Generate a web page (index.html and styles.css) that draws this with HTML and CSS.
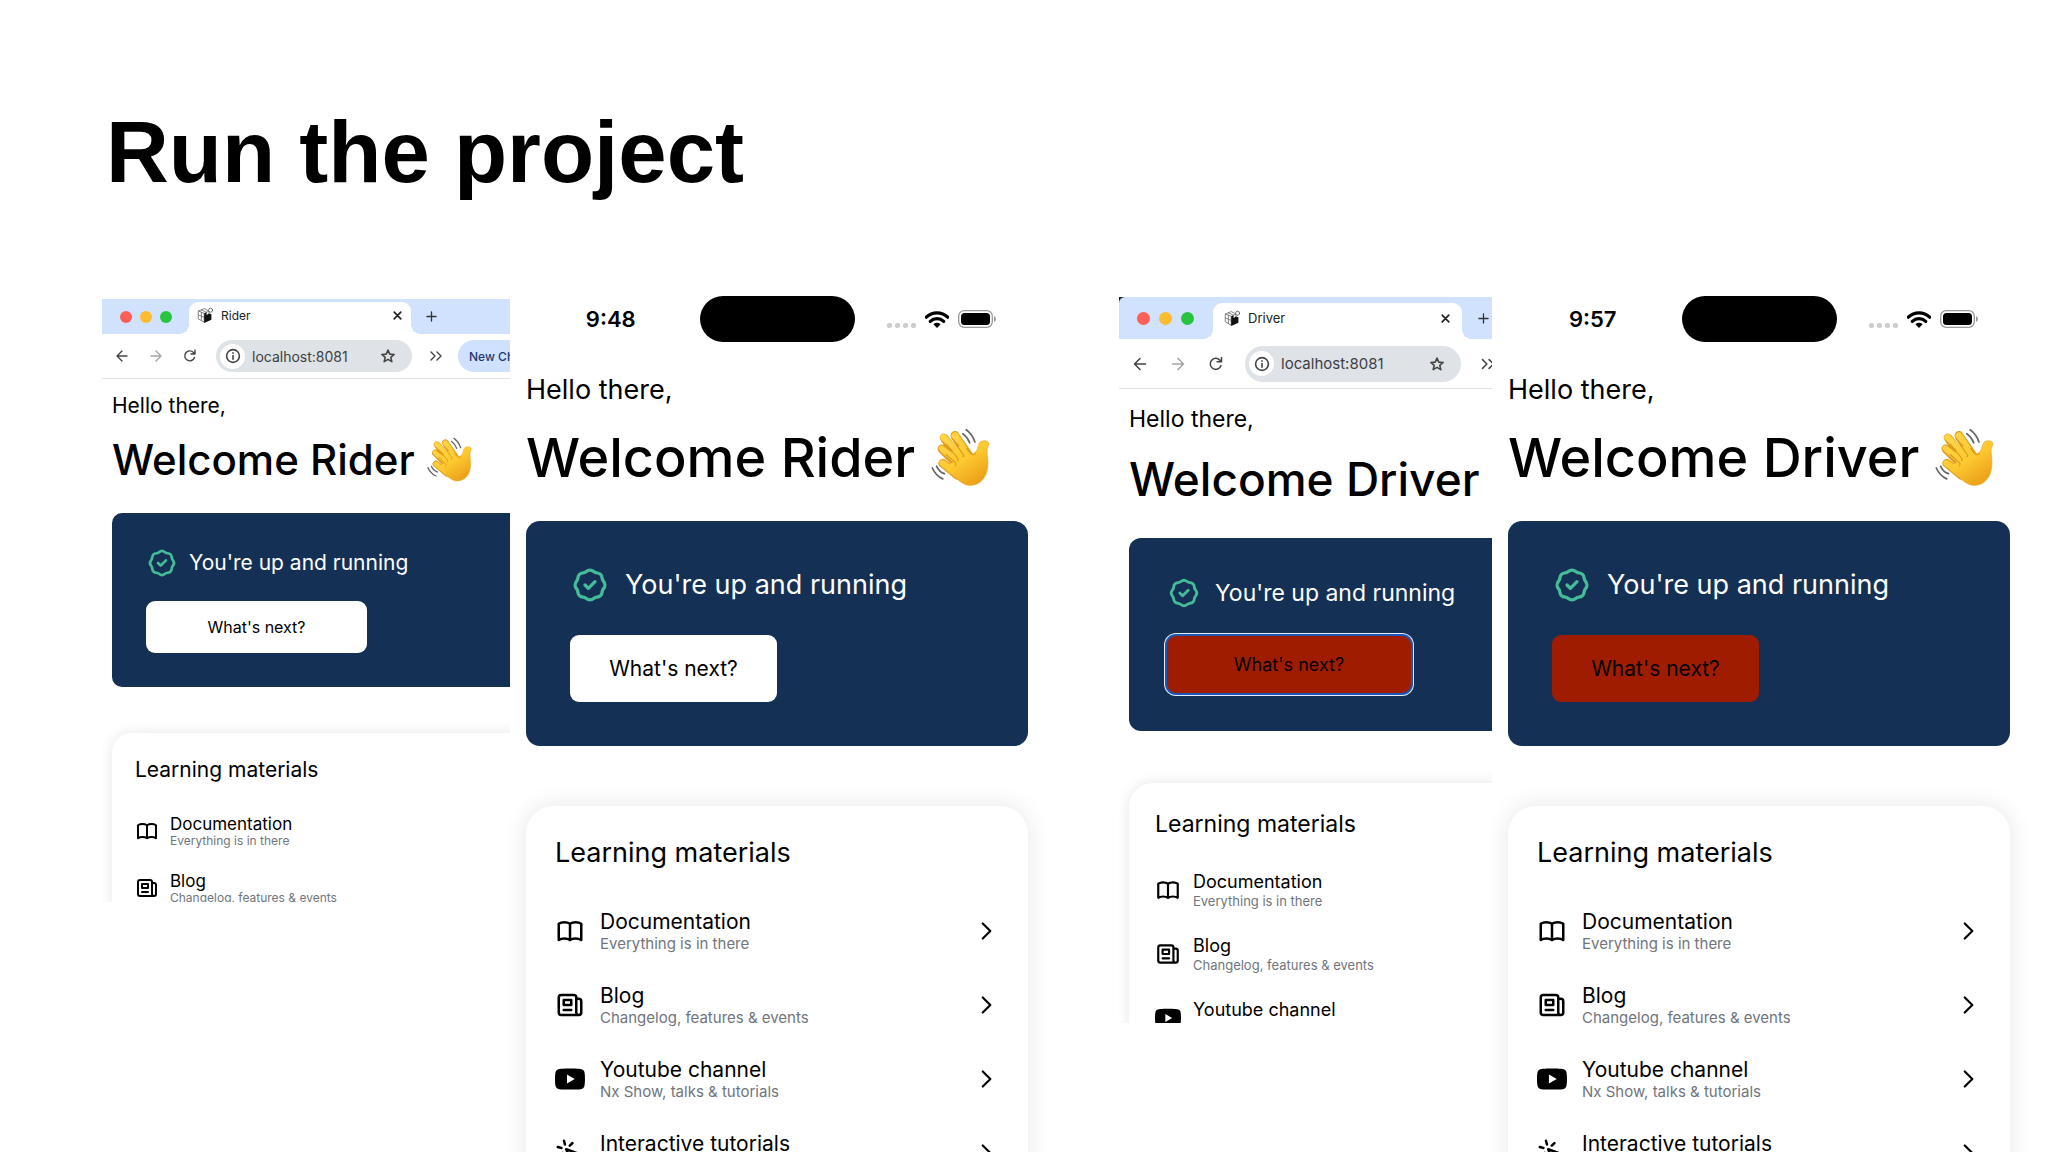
FILE: index.html
```html
<!DOCTYPE html>
<html lang="en">
<head>
  <meta charset="UTF-8" />
  <meta name="viewport" content="width=device-width, initial-scale=1.0" />
  <title>Run the project</title>
  <link rel="stylesheet" href="styles.css">
</head>
<body>
  <!-- Shared icons -->
  <svg class="sprite" aria-hidden="true">
    <symbol id="check" viewBox="0 0 24 24"><path d="M9 12l2 2 4-4M7.835 4.697a3.42 3.42 0 001.946-.806 3.42 3.42 0 014.438 0 3.42 3.42 0 001.946.806 3.42 3.42 0 013.138 3.138 3.42 3.42 0 00.806 1.946 3.42 3.42 0 010 4.438 3.42 3.42 0 00-.806 1.946 3.42 3.42 0 01-3.138 3.138 3.42 3.42 0 00-1.946.806 3.42 3.42 0 01-4.438 0 3.42 3.42 0 00-1.946-.806 3.42 3.42 0 01-3.138-3.138 3.42 3.42 0 00-.806-1.946 3.42 3.42 0 010-4.438 3.42 3.42 0 00.806-1.946 3.42 3.42 0 013.138-3.138z"/></symbol>
    <symbol id="book" viewBox="0 0 24 24"><path d="M12 6.253v13m0-13C10.832 5.477 9.246 5 7.5 5S4.168 5.477 3 6.253v13C4.168 18.477 5.754 18 7.5 18s3.332.477 4.5 1.253m0-13C13.168 5.477 14.754 5 16.5 5c1.747 0 3.332.477 4.5 1.253v13C19.832 18.477 18.247 18 16.5 18c-1.746 0-3.332.477-4.5 1.253"/></symbol>
    <symbol id="news" viewBox="0 0 24 24"><path d="M19 20H5a2 2 0 01-2-2V6a2 2 0 012-2h10a2 2 0 012 2v1m2 13a2 2 0 01-2-2V7m2 13a2 2 0 002-2V9a2 2 0 00-2-2h-2m-4-3H9M7 16h6M7 8h6v4H7V8z"/></symbol>
    <symbol id="youtube" viewBox="0 0 24 24"><path fill="#000" stroke="none" d="M23.5 6.2a3 3 0 00-2.1-2.1C19.5 3.55 12 3.55 12 3.55s-7.5 0-9.4.55A3 3 0 00.5 6.2C0 8.1 0 12 0 12s0 3.9.5 5.8a3 3 0 002.1 2.1c1.9.55 9.4.55 9.4.55s7.5 0 9.4-.55a3 3 0 002.1-2.1C24 15.9 24 12 24 12s0-3.9-.5-5.8zM9.55 15.6V8.4l6.27 3.6z"/></symbol>
    <symbol id="cursor" viewBox="0 0 24 24"><path d="M15 15l-2 5L9 9l11 4-5 2zm0 0l5 5M7.188 2.239l.777 2.897M5.136 7.965l-2.898-.777M13.95 4.05l-2.122 2.122m-5.657 5.656l-2.12 2.122"/></symbol>
    <symbol id="chevron" viewBox="0 0 24 24"><path d="M9 5l7 7-7 7"/></symbol>
    <symbol id="back" viewBox="0 0 20 20"><path d="M15 10H5m5-5l-5 5 5 5"/></symbol>
    <symbol id="forward" viewBox="0 0 20 20"><path d="M5 10h10m-5-5l5 5-5 5"/></symbol>
    <symbol id="reload" viewBox="0 0 20 20"><path d="M14.5 11.5a5 5 0 11-1-5L15 8m0-4v4h-4"/></symbol>
    <symbol id="info" viewBox="0 0 20 20"><circle cx="10" cy="10" r="8"/><path d="M10 9.500v4.500M10 6v.500"/></symbol>
    <symbol id="star" viewBox="0 0 20 20"><path d="M10 2.500l2.200 5.100 5.500.5-4.200 3.600 1.300 5.400-4.800-2.900-4.800 2.900 1.300-5.400-4.200-3.600 5.500-.5z"/></symbol>
    <symbol id="more" viewBox="0 0 20 20"><path d="M5 6l4 4-4 4m6-8l4 4-4 4"/></symbol>
    <symbol id="close" viewBox="0 0 20 20"><path d="M4 4l12 12M16 4L4 16"/></symbol>
    <symbol id="plus" viewBox="0 0 20 20"><path d="M10 3v14M3 10h14"/></symbol>
    <symbol id="cube" viewBox="0 0 20 20">
      <path fill="#fff" stroke="#666" d="M2 5l7-3 6 3v10l-6 4-7-4zM2 5l7 3 6-3M9 8v11M2 10l7 3M5.500 6.500v10M5.500 3.500l6 3"/>
      <path fill="#111" stroke="none" d="M9 8l3-1v3l3-2 3 1v7l-9 4z"/>
      <circle cx="17" cy="4" r="2.500" fill="#fff" stroke="#555"/>
    </symbol>
    <symbol id="wifi" viewBox="0 0 24 17">
      <path fill="none" stroke="#000" stroke-width="3.200" d="M1.300 6.200a15.500 15.500 0 0121.400 0M5.300 10.300a9.800 9.800 0 0113.400 0"/>
      <path fill="#000" d="M12 17l-3.600-3.700a5.200 5.200 0 017.200 0z"/>
    </symbol>
    <symbol id="battery" viewBox="0 0 38 18">
      <rect x=".7" y=".7" width="33.600" height="16.600" rx="5.500" fill="none" stroke="#999" stroke-width="1.300"/>
      <rect x="3" y="3" width="29" height="12" rx="3.500" fill="#000"/>
      <path fill="#999" d="M36 6q2 1 2 3t-2 3z"/>
    </symbol>
    <symbol id="wave" viewBox="0 0 138 138">
      <linearGradient id="skin" x1="0" y1="0" x2="0.600" y2="1">
        <stop offset="0" stop-color="#ffd84a"/>
        <stop offset=".6" stop-color="#fdc930"/>
        <stop offset="1" stop-color="#eda41c"/>
      </linearGradient>
      <path fill="none" stroke="#e09a1c" stroke-width="20" stroke-linecap="round" d="M55 17l32 46M31 24l38 51M25 48l40 40M27 81l34 28"/>
      <path fill="url(#skin)" stroke="#e9a825" stroke-width="1.500" d="M47 21c-4-7 8-17 15-8l28 42q6 7 11 2c6-5 7-15 10-22 4-8 23-8 22 2-1 6-5 9-4 18 1 14 4 28 0 43-4 20-20 34-38 34-12 0-20-6-28-12L22 87c-9-8 1-18 10-12l10 8 8-4-30-26c-8-8 1-18 9-11l18 14 2-5-26-24c-7-9 5-19 13-10l24 27 5-3z"/>
      <path fill="none" stroke="#de941d" stroke-width="2.500" stroke-linecap="round" d="M48 24l26 37q3 5-1 5M36 38l25 31q3 4 0 6M35 61l20 18q5 4 1 8M82 47l9 12q5 5 11 0"/>
      <path fill="none" stroke="#666" stroke-width="4" stroke-linecap="round" d="M81 4q14 10 20 28M73 13q11 8 16 21M3 92q8 18 24 25M13 88q6 13 18 17"/>
    </symbol>
  </svg>

  <main class="slide">
    <h1>Run the project</h1>

    <div class="screens">
      <!-- Rider: web + iOS -->
      <section class="pair pair-rider">
        <div class="panel browser rider">
          <div class="tabs">
            <span class="light red"></span><span class="light yellow"></span><span class="light green"></span>
            <div class="tab">
              <svg class="favicon"><use href="#cube"/></svg>
              <span>Rider</span>
              <button class="tab-close" aria-label="Close tab"><svg><use href="#close"/></svg></button>
            </div>
            <button class="tab-new" aria-label="New tab"><svg><use href="#plus"/></svg></button>
          </div>
          <div class="toolbar">
            <button aria-label="Back"><svg><use href="#back"/></svg></button>
            <button class="dim" aria-label="Forward"><svg><use href="#forward"/></svg></button>
            <button aria-label="Reload"><svg><use href="#reload"/></svg></button>
            <div class="omnibox">
              <span class="site"><svg><use href="#info"/></svg></span>
              <input type="text" value="localhost:8081" aria-label="Address">
              <button aria-label="Bookmark"><svg><use href="#star"/></svg></button>
            </div>
            <button aria-label="More"><svg><use href="#more"/></svg></button>
            <button class="chip">New Chrome available</button>
          </div>
          <div class="page">
            <p class="hello">Hello there,</p>
            <h2>Welcome Rider <svg class="wave" role="img" aria-label="waving hand"><use href="#wave"/></svg></h2>
            <div class="hero">
              <p class="running"><svg><use href="#check"/></svg>You're up and running</p>
              <button class="next">What's next?</button>
            </div>
            <div class="learning">
              <h3>Learning materials</h3>
              <ul>
                <li><a href="#"><svg class="icon"><use href="#book"/></svg><span class="label">Documentation<small>Everything is in there</small></span></a></li>
                <li><a href="#"><svg class="icon"><use href="#news"/></svg><span class="label">Blog<small>Changelog, features &amp; events</small></span></a></li>
              </ul>
            </div>
          </div>
        </div>

        <div class="panel phone">
          <div class="status">
            <time>9:48</time>
            <span class="island"></span>
            <span class="signal"><span class="dots"><i></i><i></i><i></i><i></i></span><svg class="wifi"><use href="#wifi"/></svg><svg class="battery"><use href="#battery"/></svg></span>
          </div>
          <div class="page">
            <p class="hello">Hello there,</p>
            <h2>Welcome Rider <svg class="wave" role="img" aria-label="waving hand"><use href="#wave"/></svg></h2>
            <div class="hero">
              <p class="running"><svg><use href="#check"/></svg>You're up and running</p>
              <button class="next">What's next?</button>
            </div>
            <div class="learning">
              <h3>Learning materials</h3>
              <ul>
                <li><a href="#"><svg class="icon"><use href="#book"/></svg><span class="label">Documentation<small>Everything is in there</small></span><svg class="go"><use href="#chevron"/></svg></a></li>
                <li><a href="#"><svg class="icon"><use href="#news"/></svg><span class="label">Blog<small>Changelog, features &amp; events</small></span><svg class="go"><use href="#chevron"/></svg></a></li>
                <li><a href="#"><svg class="icon"><use href="#youtube"/></svg><span class="label">Youtube channel<small>Nx Show, talks &amp; tutorials</small></span><svg class="go"><use href="#chevron"/></svg></a></li>
                <li><a href="#"><svg class="icon"><use href="#cursor"/></svg><span class="label">Interactive tutorials<small>Create an app, step by step</small></span><svg class="go"><use href="#chevron"/></svg></a></li>
              </ul>
            </div>
          </div>
        </div>
      </section>

      <!-- Driver: web + iOS -->
      <section class="pair pair-driver">
        <div class="panel browser driver">
          <div class="tabs">
            <span class="light red"></span><span class="light yellow"></span><span class="light green"></span>
            <div class="tab">
              <svg class="favicon"><use href="#cube"/></svg>
              <span>Driver</span>
              <button class="tab-close" aria-label="Close tab"><svg><use href="#close"/></svg></button>
            </div>
            <button class="tab-new" aria-label="New tab"><svg><use href="#plus"/></svg></button>
          </div>
          <div class="toolbar">
            <button aria-label="Back"><svg><use href="#back"/></svg></button>
            <button class="dim" aria-label="Forward"><svg><use href="#forward"/></svg></button>
            <button aria-label="Reload"><svg><use href="#reload"/></svg></button>
            <div class="omnibox">
              <span class="site"><svg><use href="#info"/></svg></span>
              <input type="text" value="localhost:8081" aria-label="Address">
              <button aria-label="Bookmark"><svg><use href="#star"/></svg></button>
            </div>
            <button aria-label="More"><svg><use href="#more"/></svg></button>
          </div>
          <div class="page">
            <p class="hello">Hello there,</p>
            <h2>Welcome Driver</h2>
            <div class="hero">
              <p class="running"><svg><use href="#check"/></svg>You're up and running</p>
              <button class="next danger focused">What's next?</button>
            </div>
            <div class="learning">
              <h3>Learning materials</h3>
              <ul>
                <li><a href="#"><svg class="icon"><use href="#book"/></svg><span class="label">Documentation<small>Everything is in there</small></span></a></li>
                <li><a href="#"><svg class="icon"><use href="#news"/></svg><span class="label">Blog<small>Changelog, features &amp; events</small></span></a></li>
                <li><a href="#"><svg class="icon"><use href="#youtube"/></svg><span class="label">Youtube channel<small>Nx Show, talks &amp; tutorials</small></span></a></li>
              </ul>
            </div>
          </div>
        </div>

        <div class="panel phone">
          <div class="status">
            <time>9:57</time>
            <span class="island"></span>
            <span class="signal"><span class="dots"><i></i><i></i><i></i><i></i></span><svg class="wifi"><use href="#wifi"/></svg><svg class="battery"><use href="#battery"/></svg></span>
          </div>
          <div class="page">
            <p class="hello">Hello there,</p>
            <h2>Welcome Driver <svg class="wave" role="img" aria-label="waving hand"><use href="#wave"/></svg></h2>
            <div class="hero">
              <p class="running"><svg><use href="#check"/></svg>You're up and running</p>
              <button class="next danger">What's next?</button>
            </div>
            <div class="learning">
              <h3>Learning materials</h3>
              <ul>
                <li><a href="#"><svg class="icon"><use href="#book"/></svg><span class="label">Documentation<small>Everything is in there</small></span><svg class="go"><use href="#chevron"/></svg></a></li>
                <li><a href="#"><svg class="icon"><use href="#news"/></svg><span class="label">Blog<small>Changelog, features &amp; events</small></span><svg class="go"><use href="#chevron"/></svg></a></li>
                <li><a href="#"><svg class="icon"><use href="#youtube"/></svg><span class="label">Youtube channel<small>Nx Show, talks &amp; tutorials</small></span><svg class="go"><use href="#chevron"/></svg></a></li>
                <li><a href="#"><svg class="icon"><use href="#cursor"/></svg><span class="label">Interactive tutorials<small>Create an app, step by step</small></span><svg class="go"><use href="#chevron"/></svg></a></li>
              </ul>
            </div>
          </div>
        </div>
      </section>
    </div>
  </main>
</body>
</html>
```
FILE: styles.css
```css
* {
  box-sizing: border-box;
}
body {
  margin: 0;
  background: #fff;
  color: #000;
  font-family: Inter, "Liberation Sans", sans-serif;
}
h1, h2, h3, p, ul {
  margin: 0;
  padding: 0;
}
ul {
  list-style: none;
}
button {
  border: 0;
  padding: 0;
  background: none;
  color: inherit;
  font: inherit;
}
svg {
  display: block;
  flex: none;
  fill: none;
  stroke: currentColor;
  stroke-width: 2;
  stroke-linecap: round;
  stroke-linejoin: round;
}
.sprite {
  position: absolute;
  width: 0;
  height: 0;
}

/* Slide */
.slide {
  height: 100vh;
  overflow: hidden;
  padding: 102px 38px 0 102px;
}
h1 {
  padding-left: 4px;
  font-family: "Liberation Sans", Arial, sans-serif;
  font-size: 87px;
  line-height: 100px;
}
.screens {
  display: grid;
  grid-template-columns: 926fr 891fr;
  gap: 91px;
  margin-top: 94px;
}
.pair {
  display: grid;
  gap: 16px;
  align-items: start;
}
.pair-rider {
  grid-template-columns: minmax(0, 408fr) minmax(0, 502fr);
}
.pair-driver {
  grid-template-columns: minmax(0, 373fr) minmax(0, 502fr);
}

/* Sizes of each device */
.rider {
  --hello: 21px;
  --hello-line: 28px;
  --welcome: 42px;
  --welcome-line: 54px;
  --welcome-gap: 13px;
  --wave: 46px;
  --page-top: 13px;
  --hero-gap: 26px;
  --hero-pad: 34px;
  --badge: 32px;
  --badge-gap: 11px;
  --next-gap: 22px;
  --next-width: 221px;
  --next-height: 52px;
  --next-font: 16px;
  --card-gap: 46px;
  --card-pad: 23px;
  --icon: 24px;
  --icon-gap: 11px;
  --list-gap: 30px;
  --row-gap: 23px;
  --name: 17px;
  --name-line: 20px;
  --sub: 12px;
  --sub-line: 14px;
  --radius: 10px;
  --card-radius: 20px;
  --tabs: 35px;
  --tool: 45px;
  --tool-icon: 20px;
  --tool-gap: 14px;
  --pill: 32px;
  --omnibox: 196px;
  --tab-width: 222px;
  --tab-left: 9px;
  --tab-top: 3px;
  --tab-pad: 8px;
  --tab-font: 12px;
  --light: 12px;
  --light-gap: 8px;
  --url: 14px;
}
.driver {
  --hello: 23px;
  --hello-line: 30px;
  --welcome: 46px;
  --welcome-line: 60px;
  --welcome-gap: 15px;
  --page-top: 15px;
  --hero-gap: 29px;
  --hero-pad: 38px;
  --badge: 34px;
  --badge-gap: 14px;
  --next-gap: 26px;
  --next-width: 244px;
  --next-height: 57px;
  --next-font: 18px;
  --card-gap: 52px;
  --card-pad: 26px;
  --icon: 26px;
  --icon-gap: 12px;
  --list-gap: 32px;
  --row-gap: 26px;
  --name: 18px;
  --name-line: 22px;
  --sub: 13px;
  --sub-line: 16px;
  --radius: 12px;
  --card-radius: 24px;
  --tabs: 42px;
  --tool: 50px;
  --tool-icon: 22px;
  --tool-gap: 16px;
  --pill: 36px;
  --omnibox: 216px;
  --tab-width: 249px;
  --tab-left: 10px;
  --tab-top: 6px;
  --tab-pad: 11px;
  --tab-font: 13px;
  --light: 13px;
  --light-gap: 9px;
  --url: 15px;
}
.phone {
  --hello: 27px;
  --hello-line: 36px;
  --welcome: 54px;
  --welcome-line: 68px;
  --welcome-gap: 16px;
  --wave: 60px;
  --hero-gap: 29px;
  --hero-pad: 44px;
  --badge: 40px;
  --badge-gap: 15px;
  --next-gap: 30px;
  --next-width: 207px;
  --next-height: 67px;
  --next-font: 21px;
  --card-gap: 60px;
  --card-pad: 29px;
  --icon: 30px;
  --icon-gap: 15px;
  --list-gap: 38px;
  --row-gap: 30px;
  --name: 21px;
  --name-line: 26px;
  --sub: 15px;
  --sub-line: 18px;
  --radius: 14px;
  --card-radius: 28px;
}

/* Browser window */
.browser {
  overflow: hidden;
}
.browser.rider {
  aspect-ratio: 408 / 603;
  margin-top: 3px;
}
.browser.driver {
  aspect-ratio: 374 / 728;
  margin-top: 1px;
  background: #222;
}
.tabs {
  display: flex;
  align-items: center;
  gap: var(--light-gap);
  height: var(--tabs);
  padding-left: 18px;
  background: #d0e2fe;
}
.driver .tabs {
  border-top-left-radius: 6px;
}
.light {
  flex: none;
  width: var(--light);
  height: var(--light);
  border-radius: 50%;
}
.red {
  background: #fe5f57;
}
.yellow {
  background: #febb2e;
}
.green {
  background: #28c33f;
}
.tab {
  position: relative;
  display: flex;
  flex: none;
  align-items: center;
  gap: 8px;
  align-self: flex-end;
  width: var(--tab-width);
  height: calc(100% - var(--tab-top));
  margin-left: var(--tab-left);
  padding: 0 var(--tab-pad) 6px;
  border-radius: 9px 9px 0 0;
  background: #fff;
  font-size: var(--tab-font);
  color: #222;
}
/* flared feet of the active tab */
.tab::before, .tab::after {
  content: "";
  position: absolute;
  bottom: 0;
  width: 10px;
  height: 10px;
}
.tab::before {
  right: 100%;
  background: radial-gradient(circle at 0 0, #d0e2fe 10px, #fff 10px);
}
.tab::after {
  left: 100%;
  background: radial-gradient(circle at 100% 0, #d0e2fe 10px, #fff 10px);
}
.favicon {
  width: 16px;
  height: 16px;
  stroke-width: 1;
}
.tab-close {
  margin-left: auto;
}
.tab-close svg {
  width: 11px;
  height: 11px;
  stroke-width: 3;
}
.tab-new {
  margin-left: 6px;
  color: #333;
}
.tab-new svg {
  width: 13px;
  height: 13px;
  stroke-width: 2;
}
.toolbar {
  display: flex;
  align-items: center;
  gap: var(--tool-gap);
  height: var(--tool);
  padding-left: 10px;
  border-bottom: 1px solid #dfe1e4;
  background: #fff;
  color: #444;
}
.toolbar > * {
  flex: none;
}
.toolbar svg {
  width: var(--tool-icon);
  height: var(--tool-icon);
  stroke-width: 1.4;
}
.dim {
  color: #a5a5a5;
}
.omnibox {
  display: flex;
  align-items: center;
  width: var(--omnibox);
  height: var(--pill);
  margin-left: 2px;
  padding: 0 16px 0 4px;
  border-radius: 20px;
  background: #dfe3e7;
}
.site {
  display: flex;
  align-items: center;
  justify-content: center;
  width: 25px;
  height: 25px;
  border-radius: 50%;
  background: #fff;
}
.toolbar .omnibox svg {
  width: 16px;
  height: 16px;
  stroke-width: 2;
}
.omnibox input {
  flex: 1;
  min-width: 0;
  margin-left: 7px;
  padding: 0;
  border: 0;
  background: none;
  color: #3c4043;
  font-family: inherit;
  font-size: var(--url);
}
.chip {
  height: var(--pill);
  margin-left: -2px;
  padding: 0 11px;
  border-radius: 20px;
  background: #cfe1ff;
  color: #1a3970;
  font-size: 12px;
  font-weight: 500;
  white-space: nowrap;
}

/* App page */
.browser .page {
  height: 100%;
  padding: var(--page-top) 10px 0;
  background: #fff;
}
.hello {
  font-size: var(--hello);
  line-height: var(--hello-line);
}
h2 {
  display: flex;
  align-items: center;
  gap: 12px;
  margin-top: var(--welcome-gap);
  font-size: var(--welcome);
  font-weight: 500;
  line-height: var(--welcome-line);
  white-space: nowrap;
}
.phone h2 {
  gap: 16px;
}
.wave {
  width: var(--wave);
  height: var(--wave);
  stroke: none;
}
.hero {
  margin-top: var(--hero-gap);
  padding: var(--hero-pad);
  border-radius: var(--radius);
  background: #143055;
}
.browser .hero {
  margin-right: -40px;
}
.running {
  display: flex;
  align-items: center;
  gap: var(--badge-gap);
  color: #fff;
  font-size: var(--hello);
  line-height: var(--badge);
  white-space: nowrap;
}
.running svg {
  width: var(--badge);
  height: var(--badge);
  color: #45bc98;
}
.next {
  display: block;
  width: var(--next-width);
  height: var(--next-height);
  margin-top: var(--next-gap);
  border-radius: 9px;
  background: #fff;
  color: #000;
  font-size: var(--next-font);
}
.danger {
  background: #a01c00;
}
.focused {
  box-shadow: 0 0 0 2px #1b55b5, 0 0 0 3px #e4eeff;
}
.learning {
  margin-top: var(--card-gap);
  padding: var(--card-pad);
  border-radius: var(--card-radius);
  background: #fff;
  box-shadow: 0 0 24px rgba(0, 0, 0, 0.1);
}
.browser .learning {
  margin-right: -40px;
  height: 400px;
  box-shadow: 0 0 14px rgba(0, 0, 0, 0.1);
}
h3 {
  font-size: var(--hello);
  font-weight: 400;
  line-height: var(--hello-line);
}
.learning ul {
  display: flex;
  flex-direction: column;
  gap: var(--row-gap);
  margin-top: var(--list-gap);
}
.learning a {
  display: flex;
  align-items: center;
  gap: var(--icon-gap);
  color: #000;
  text-decoration: none;
}
.icon {
  width: var(--icon);
  height: var(--icon);
}
.label {
  font-size: var(--name);
  line-height: var(--name-line);
}
.label small {
  display: block;
  color: #70757c;
  font-size: var(--sub);
  line-height: var(--sub-line);
}
.go {
  width: 26px;
  height: 26px;
  margin-left: auto;
  stroke-width: 2;
}

/* Phone status bar */
.status {
  display: grid;
  grid-template-columns: 1fr 155px 1fr;
  align-items: center;
}
.status time {
  padding-right: 4px;
  text-align: center;
  font-size: 22px;
  font-weight: 600;
}
.island {
  height: 46px;
  border-radius: 23px;
  background: #000;
}
.signal {
  display: flex;
  align-items: center;
  gap: 9px;
  padding-left: 32px;
}
.dots {
  display: flex;
  gap: 3px;
  padding-top: 12px;
}
.dots i {
  width: 5px;
  height: 5px;
  border-radius: 2px;
  background: #ccc;
}
.signal svg {
  stroke: none;
}
.wifi {
  width: 24px;
  height: 17px;
}
.battery {
  width: 38px;
  height: 18px;
}
.phone .page {
  padding-top: 30px;
}
.phone .learning {
  padding-bottom: 60px;
}
```
